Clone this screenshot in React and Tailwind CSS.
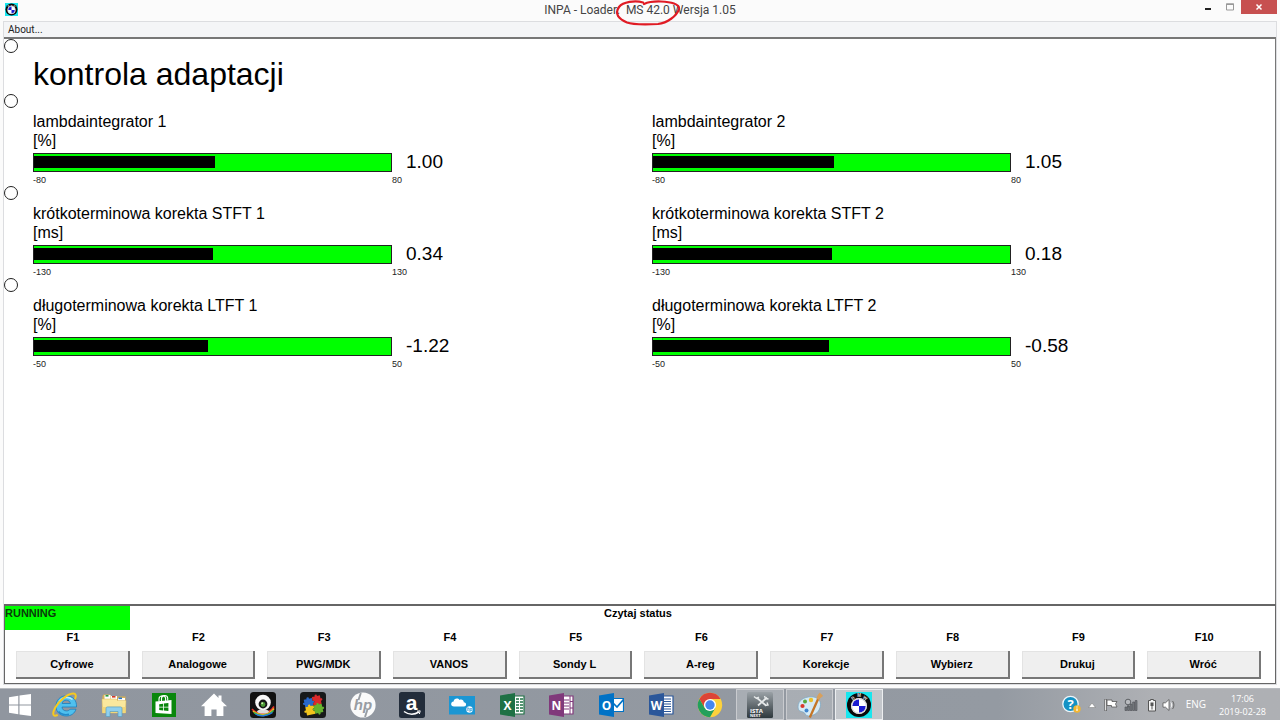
import React, { useState } from "react";

const ROWS = [
  {
    id: "lambda",
    unit: "%",
    min: -80,
    max: 80,
    gauges: [
      { label: "lambdaintegrator 1", value: 1.0 },
      { label: "lambdaintegrator 2", value: 1.05 },
    ],
  },
  {
    id: "stft",
    unit: "ms",
    min: -130,
    max: 130,
    gauges: [
      { label: "krótkoterminowa korekta STFT 1", value: 0.34 },
      { label: "krótkoterminowa korekta STFT 2", value: 0.18 },
    ],
  },
  {
    id: "ltft",
    unit: "%",
    min: -50,
    max: 50,
    gauges: [
      { label: "długoterminowa korekta LTFT 1", value: -1.22 },
      { label: "długoterminowa korekta LTFT 2", value: -0.58 },
    ],
  },
];

const FUNCTION_KEYS = [
  "Cyfrowe",
  "Analogowe",
  "PWG/MDK",
  "VANOS",
  "Sondy L",
  "A-reg",
  "Korekcje",
  "Wybierz",
  "Drukuj",
  "Wróć",
];

const Icon = ({ className = "h-[26px] w-[26px]", children }) => (
  <svg viewBox="0 0 26 26" className={className} aria-hidden="true">
    {children}
  </svg>
);

const RoundelIcon = ({ className }) => (
  <Icon className={className}>
    <rect width="26" height="26" fill="#18e6ee" />
    <circle cx="13" cy="13" r="12" fill="#0a0a0a" />
    <circle cx="13" cy="14" r="8" fill="#fff" />
    <path d="M13 14V7.200A6.800 6.800 0 0 0 6.200 14zM13 14v6.800a6.800 6.800 0 0 0 6.800-6.800z" fill="#1b1bd0" />
    <circle cx="13" cy="14" r="7.300" fill="none" stroke="#d4d4d4" strokeWidth="1" />
    <text x="7" y="7.500" fontSize="4.500" fontWeight="700" fill="#ddd" textAnchor="middle" transform="rotate(-36 7 6)" fontFamily="Liberation Sans">B</text>
    <text x="13" y="5" fontSize="4.500" fontWeight="700" fill="#ddd" textAnchor="middle" fontFamily="Liberation Sans">M</text>
    <text x="19" y="7.500" fontSize="4.500" fontWeight="700" fill="#ddd" textAnchor="middle" transform="rotate(36 19 6)" fontFamily="Liberation Sans">W</text>
  </Icon>
);

const WindowsIcon = () => (
  <Icon>
    <path d="M2 5.200 11.300 3.800V12.400H2zM12.500 3.600 24 2V12.400H12.500zM2 13.600H11.300V22.200L2 20.800zM12.500 13.600H24V24L12.500 22.400z" fill="#fff" />
  </Icon>
);

const ExplorerEIcon = () => (
  <Icon>
    <path
      d="M24.500 15H10c.2 2.400 1.900 3.900 4.400 3.900 1.700 0 3-.6 3.800-1.700h5.800c-1.300 4.300-5 6.800-9.700 6.800C8.300 24 4 20 4 14.200 4 8.200 8.300 3.800 14.200 3.800c6.600 0 10.700 4.400 10.300 11.200zM10.100 11.500h8.300c-.3-2-1.900-3.300-4.100-3.300-2.300 0-3.800 1.200-4.200 3.300z"
      fill="#4fc0ee"
      stroke="#1c7dbd"
      strokeWidth=".8"
    />
    <path d="M7.500 9c3-4 9-4.800 13-1.500" stroke="#b5ebfd" strokeWidth="1.600" fill="none" />
    <path d="M6.500 19.500c2 2.700 6.500 4 10.500 2.700" stroke="#2389c9" strokeWidth="1.600" fill="none" />
    <path d="M5 23.300C.5 25 .2 21 3.300 15.400 7.200 8.600 15.500 2 21 1.600c3.100-.1 3.200 2.400 2.200 4.900" fill="none" stroke="#f6c91f" strokeWidth="2" strokeLinecap="round" />
  </Icon>
);

const FolderIcon = () => (
  <Icon>
    <path d="M1.500 4 2.500 2.500h6.500l1 2h14.500v16H1.500z" fill="#d8b155" />
    <path d="M3.500 3h6v5h-6zM10 4h6v5h-6zM17 6h7v3h-7z" fill="#fff" />
    <path d="M4.500 3h3v1.600h-3z" fill="#279b41" />
    <path d="M11 4h3.500v1.600H11z" fill="#d63a27" />
    <path d="M17.500 5.500H21v1.600h-3.500z" fill="#2878c8" />
    <path d="M1 7h14l1.500 1.500H25L24.500 21h-23z" fill="#fae89d" stroke="#dbb95e" strokeWidth=".5" />
    <path d="M1.500 15h23v6h-23z" fill="#f3d777" />
    <path d="M5 24.500V16.500c0-1 .6-1.600 1.600-1.600h12.800c1 0 1.600.6 1.600 1.600v8h-4V19.500H9v5z" fill="#8fd0ee" stroke="#5a9dc0" strokeWidth=".7" />
  </Icon>
);

const StoreIcon = () => (
  <Icon>
    <rect x="1" y="1" width="24" height="24" fill="#0a870c" />
    <path d="M4.500 9.500 20.500 8v14L4.500 21z" fill="#fff" />
    <path d="M8 9.500V7c0-4 6-4.500 6.600-.8V9M10.500 9V6.500c0-3.600 5.600-4 6.200-.5v2.500" fill="none" stroke="#fff" strokeWidth="1.100" />
    <path d="M8.200 12.200l3.800-.5v3H8.200zM12.800 11.600l4.600-.6v3.700h-4.600zM8.200 15.500H12v3l-3.800-.4zM12.800 15.500h4.600v3.600l-4.600-.5z" fill="#0a870c" />
  </Icon>
);

const HomeIcon = () => (
  <Icon>
    <path d="M13 1.500 17.500 6V3.500H20.500V9L26 14.300H22.400V24H15.600V17.500H10.400V24H3.600V14.300H0z" fill="#fff" />
  </Icon>
);

const WebcamIcon = () => (
  <Icon>
    <rect width="26" height="26" rx="3.500" fill="#111" />
    <path d="M2 17c5 6 17 6 22-2.500" stroke="#e8312a" strokeWidth="1.600" fill="none" />
    <path d="M3 19c5.500 5.500 16 5 21-2.500" stroke="#f1b81c" strokeWidth="1.600" fill="none" />
    <path d="M4 20.500c5 4.500 14 4 19.500-2" stroke="#35b34a" strokeWidth="1.500" fill="none" />
    <path d="M5.500 22c4 2.800 12 2.400 17-1.500" stroke="#2878e0" strokeWidth="1.500" fill="none" />
    <ellipse cx="13" cy="19.500" rx="6" ry="2" fill="#ddd" />
    <circle cx="13" cy="10.500" r="7.800" fill="#f8f8f8" />
    <circle cx="13" cy="12" r="4.400" fill="#161616" />
    <circle cx="13" cy="12.500" r="2.400" fill="#4c9b35" />
    <circle cx="12.200" cy="11.300" r="1" fill="#c9f0b0" />
  </Icon>
);

const PuzzleIcon = () => (
  <Icon>
    <rect width="26" height="26" rx="3.500" fill="#17191a" />
    <g transform="rotate(-12 13 13)">
      <path d="M5 6h3c-.8-2.400 3-2.400 2.300 0H13.500V9c2-.6 2 2.600 0 2v2.500H5V11c-2.200.6-2.200-2.700 0-2z" fill="#2868cc" />
      <path d="M13.500 5h3c-.6-2.300 2.800-2.300 2.200 0h3v3.200c2.200-.5 2.200 2.600 0 2.200v3.100h-8.200V11c2 .6 2-2.600 0-2z" fill="#db2a2c" />
      <path d="M5 13.500h3c-.6-2.300 2.700-2.300 2.200 0h3.300v3c-2.200-.6-2.200 2.600 0 2.200V22H5v-3c-2.500.5-2.500-2.800 0-2.200z" fill="#f1c41c" />
      <path d="M13.500 13.500h3c-.6-2.200 2.600-2.200 2.200 0h3v3.200c2.200-.5 2.200 2.600 0 2.200V22h-3c.5 2.400-2.700 2.400-2.200 0h-3v-3.300c-2.200.4-2.200-2.800 0-2.200z" fill="#65b32e" />
    </g>
  </Icon>
);

const HpIcon = () => (
  <Icon>
    <circle cx="13" cy="13" r="12.600" fill="#fafafa" />
    <path d="M10.800 1 8.500 8M15 25l2.300-7" stroke="#989da3" strokeWidth="1.900" />
    <text x="13" y="18" fontSize="15" fontWeight="700" fontStyle="italic" textAnchor="middle" fill="#989da3" fontFamily="Liberation Sans">hp</text>
  </Icon>
);

const AmazonIcon = () => (
  <Icon>
    <rect width="26" height="26" rx="2.500" fill="#222c3a" />
    <text x="12.500" y="17.500" fontSize="21" fontWeight="700" textAnchor="middle" fill="#fff" fontFamily="Liberation Sans">a</text>
    <path d="M5 19.500c4.600 3.300 10.500 3.300 15 .5" stroke="#fff" strokeWidth="1.500" fill="none" />
    <path d="M18 19.200l3.200-.4-.8 3.200" stroke="#fff" strokeWidth="1" fill="none" />
  </Icon>
);

const CloudIcon = () => (
  <Icon>
    <rect y="4" width="26" height="18.500" fill="#1b96d3" />
    <path d="M5 14.500c-3.800 0-3.600-4.800-.4-5C4.800 6.200 9 5.500 10.500 8c1.900-1 4.200 0 4.300 2.200 3 0 3 4.300.2 4.300z" fill="#fff" />
    <circle cx="20.500" cy="17.500" r="3.200" fill="#fff" />
    <text x="20.500" y="19" fontSize="4.500" fontStyle="italic" fontWeight="700" textAnchor="middle" fill="#1b96d3" fontFamily="Liberation Sans">hp</text>
  </Icon>
);

const OfficeIcon = ({ letter, color, children }) => (
  <Icon>
    <path d="M14 4h11v18H14z" fill="#fff" stroke={color} strokeWidth="1.200" />
    {children}
    <path d="M1 3.600 16 1v24L1 22.400z" fill={color} />
    <text x="8.500" y="17.500" fontSize="12" fontWeight="700" textAnchor="middle" fill="#fff" fontFamily="Open Sans">
      {letter}
    </text>
  </Icon>
);

const ExcelIcon = () => (
  <OfficeIcon letter="X" color="#1e7145">
    <path d="M17 7h3M21 7h3M17 10h3M21 10h3M17 13h3M21 13h3M17 16h3M21 16h3M17 19h3M21 19h3" stroke="#1e7145" strokeWidth="1.600" />
  </OfficeIcon>
);

const OneNoteIcon = () => (
  <OfficeIcon letter="N" color="#80397b">
    <path d="M16 8h5M16 11h5M16 14h5M16 17h5" stroke="#80397b" strokeWidth="1" />
    <path d="M22 4v18M22 9.500h3M22 16h3" stroke="#80397b" strokeWidth="1" />
  </OfficeIcon>
);

const OutlookIcon = () => (
  <Icon>
    <path d="M14 6.500h11.500v13H14z" fill="#fff" stroke="#0072c6" strokeWidth="1.200" />
    <path d="M15 11l4 4 6.500-7.500" stroke="#0072c6" strokeWidth="1.700" fill="none" />
    <path d="M1 3.600 16 1v24L1 22.400z" fill="#0072c6" />
    <text x="8.500" y="17.500" fontSize="12" fontWeight="700" textAnchor="middle" fill="#fff" fontFamily="Open Sans">O</text>
  </Icon>
);

const WordIcon = () => (
  <OfficeIcon letter="W" color="#2b579a">
    <path d="M16 7h7M16 9.500h7M16 12h7M16 14.500h7M16 17h7M16 19.500h7" stroke="#2b579a" strokeWidth="1.100" />
  </OfficeIcon>
);

const ChromeIcon = () => (
  <Icon>
    <circle cx="13" cy="13" r="12.200" fill="#fdd23c" />
    <path d="M13 13 7.700 16.050 2.430 6.900A12.200 12.200 0 0 1 23.570 6.900H13z" fill="#dc4437" />
    <path d="M2.430 6.900A12.200 12.200 0 0 0 13 25.200L18.300 16.050 13 13 7.700 16.050z" fill="#23a05c" />
    <circle cx="13" cy="13" r="6.100" fill="#fff" />
    <circle cx="13" cy="13" r="4.700" fill="#4587f1" />
  </Icon>
);

const IstaIcon = () => (
  <Icon>
    <defs>
      <linearGradient id="ista" x2="0" y2="1">
        <stop offset="0" stopColor="#9aa1a6" />
        <stop offset="1" stopColor="#2e383d" />
      </linearGradient>
    </defs>
    <rect width="26" height="26" rx="1.500" fill="url(#ista)" />
    <path d="M9.500 5.500l9.500 8M20 5.500l-9 8" stroke="#e6e9ea" strokeWidth="1.800" />
    <path d="M7 4.500l2.500 2L12 5M17.500 4l1 2.500 3 .5M18 13.500l3-.5-1-2.500" stroke="#e6e9ea" strokeWidth="1.400" fill="none" />
    <text x="3" y="21" fontSize="6" fontWeight="700" fill="#fff" fontFamily="Open Sans">ISTA</text>
    <text x="3" y="25" fontSize="4" fontWeight="700" fill="#fff" fontFamily="Open Sans">NEXT</text>
  </Icon>
);

const PaintIcon = () => (
  <Icon>
    <path d="M1 15C1 8.500 7 4.800 14 4.800c6 0 9.500 3 9.500 7.700 0 6.500-5.500 11.500-12 11.500-3.500 0-3-3.500-5.500-4-2.800-.5-5-1.500-5-5z" fill="#d5eaf5" stroke="#7fa9c4" strokeWidth=".8" />
    <circle cx="5.500" cy="14" r="2.100" fill="#d9382c" />
    <circle cx="8" cy="9.500" r="2" fill="#58a83c" />
    <circle cx="14" cy="8" r="2.200" fill="#eac02f" />
    <circle cx="9.500" cy="18.500" r="2" fill="#3f85cf" />
    <path d="M22 5 12.800 25.500" stroke="#c47628" strokeWidth="2.300" />
    <path d="M19.500 6.500c.5-2 1-4 3.500-6 .4 1.500 2.500 2 3 3.500-1.500 1.500-3.500 2.500-4.500 4z" fill="#d8a05c" />
  </Icon>
);

const PINNED = [
  { name: "Internet Explorer", Glyph: ExplorerEIcon },
  { name: "Explorer", Glyph: FolderIcon },
  { name: "Store", Glyph: StoreIcon },
  { name: "Home", Glyph: HomeIcon },
  { name: "Webcam", Glyph: WebcamIcon },
  { name: "Puzzle", Glyph: PuzzleIcon },
  { name: "HP", Glyph: HpIcon },
  { name: "Amazon", Glyph: AmazonIcon },
  { name: "HP Connected", Glyph: CloudIcon },
  { name: "Excel", Glyph: ExcelIcon },
  { name: "OneNote", Glyph: OneNoteIcon },
  { name: "Outlook", Glyph: OutlookIcon },
  { name: "Word", Glyph: WordIcon },
  { name: "Chrome", Glyph: ChromeIcon },
  { name: "ISTA", Glyph: IstaIcon, state: "open" },
  { name: "Paint", Glyph: PaintIcon, state: "open" },
  { name: "INPA", Glyph: RoundelIcon, state: "active" },
];

const TASK_STYLES = {
  open: "border-[#c9cbcf] bg-white/20",
  active: "border-[#eceef0] bg-white/45",
  idle: "border-transparent",
};

const TitleBar = () => (
  <header className="grid h-[21px] grid-cols-[1fr_auto_1fr] items-start bg-[#fbfbfb]">
    <div className="pl-[5px] pt-[3px]">
      <RoundelIcon className="h-[13px] w-[13px]" />
    </div>
    <h1 className="relative whitespace-pre font-[Roboto,sans-serif] text-[12px] leading-[20px] text-[#444]">
      INPA - Loader:{"  "}MS 42.0 Wersja 1.05
      <svg viewBox="0 0 68 28" className="absolute -top-px left-[71px] z-10 h-[28px] w-[68px]" aria-hidden="true">
        <path
          d="M28 3.500C20 1 8 3 4 8c-5 7 0 12 8 15.500 6 2.300 20 2 31 1.500 9-1 19-8 21-15 .6-5-8-7-18-7.500-6-.2-12 .2-17 2.500"
          fill="none"
          stroke="#e01b24"
          strokeWidth="2.200"
          strokeLinecap="round"
        />
      </svg>
    </h1>
    <div className="flex justify-end pr-[3px]">
      <button type="button" aria-label="Minimize" className="flex h-[14px] w-[22px] items-center justify-center">
        <svg viewBox="0 0 8 8" className="h-2 w-2">
          <path d="M1 5h6v2H1z" fill="#222" />
        </svg>
      </button>
      <button type="button" aria-label="Maximize" className="flex h-[14px] w-[22px] items-center justify-center">
        <svg viewBox="0 0 8 8" className="h-2 w-2">
          <path d="M.5 1h7v6h-7z" fill="none" stroke="#999" />
          <path d="M0 .5h8V2H0z" fill="#999" />
        </svg>
      </button>
      <button type="button" aria-label="Close" className="flex h-[14px] w-9 items-center justify-center bg-[#c75050]">
        <svg viewBox="0 0 8 8" className="h-2 w-2">
          <path d="M1.500 1.500l5 5M6.500 1.500l-5 5" stroke="#fff" strokeWidth="1.500" />
        </svg>
      </button>
    </div>
  </header>
);

const Gauge = ({ label, value, unit, min, max }) => {
  const percent = ((value - min) / (max - min)) * 100;

  return (
    <div className="pt-[18px]">
      <div className="text-[16px] leading-[19px]">
        <p>{label}</p>
        <p>[{unit}]</p>
      </div>
      <div className="mt-[3px] flex h-[19px] items-center">
        <div className="h-full w-[58%] border border-[#222] bg-[#00ff00] pb-[3px] pt-[2px]">
          <div className="h-full bg-black" style={{ width: `${percent}%` }} />
        </div>
        <span className="ml-[14px] text-[19px]">{value.toFixed(2)}</span>
      </div>
      <div className="flex h-[18px] items-center text-[9px] text-[#222]">
        <span className="w-[58%]">{min}</span>
        <span>{max}</span>
      </div>
    </div>
  );
};

const SelectCircle = ({ label, value, selected, onSelect }) => (
  <input
    type="radio"
    name="line"
    aria-label={label}
    checked={selected === value}
    onChange={() => onSelect(value)}
    className="block h-[14px] w-[14px] appearance-none rounded-full border border-[#222] bg-white checked:bg-black"
  />
);

const TrayIcons = () => (
  <div className="flex items-center">
    <svg viewBox="0 0 20 20" className="h-5 w-5" aria-hidden="true">
      <circle cx="8.500" cy="9" r="7.700" fill="#1592c4" stroke="#eef6fa" strokeWidth="1.300" />
      <text x="8.500" y="14" fontSize="13" fontWeight="700" textAnchor="middle" fill="#fff" fontFamily="Open Sans">?</text>
      <circle cx="15" cy="14" r="3.700" fill="#f2b632" />
      <path d="M15 13.400v2.700M15 11.600v1" stroke="#fff" strokeWidth="1.200" />
    </svg>
    <svg viewBox="0 0 8 8" className="ml-[6px] h-2 w-2" aria-hidden="true">
      <path d="M.5 6.500 4 2l3.500 4.500z" fill="#fff" stroke="#777" strokeWidth=".5" />
    </svg>
    <svg viewBox="0 0 14 14" className="ml-2 h-[14px] w-[14px]" aria-hidden="true">
      <path d="M1.700 1v12" stroke="#555" strokeWidth="2.400" />
      <path d="M1.700 1.500v11" stroke="#fff" strokeWidth="1" />
      <path d="M3 2h5v1.500h5L11.500 6l1.500 3H7.500V7.500H3z" fill="#fff" stroke="#555" strokeWidth=".8" />
    </svg>
    <svg viewBox="0 0 14 14" className="ml-[6px] h-[14px] w-[14px]" aria-hidden="true">
      <path d="M1 12.500h1.800V9H1zM3.600 12.500h1.800V8H3.600zM6.200 12.500H8V6H6.200zM8.700 12.500h1.800V4H8.700zM11.200 12.500H13V2.500h-1.800z" fill="#777b80" stroke="#4b4e52" strokeWidth=".6" />
      <circle cx="4" cy="4" r="2.800" fill="#b9bbbf" stroke="#55585c" strokeWidth=".9" />
      <path d="M4 7v2.500" stroke="#55585c" strokeWidth="1" />
    </svg>
    <svg viewBox="0 0 10 14" className="ml-[9px] h-[14px] w-[10px]" aria-hidden="true">
      <path d="M1.500 2.500h2v-1h3v1h2v10.500h-7z" fill="#f4f4f4" stroke="#555" strokeWidth="1" />
      <path d="M3.500 4.500h3V8h-3zM4.500 8v3.500h1V8z" fill="#555" />
    </svg>
    <svg viewBox="0 0 14 14" className="ml-[5px] h-[14px] w-[14px]" aria-hidden="true">
      <path d="M1 4.800h2.500L7 1.500v11L3.500 9.200H1z" fill="#fff" stroke="#555" strokeWidth=".8" />
      <path d="M9 4.500c1 1.400 1 3.600 0 5" stroke="#fff" strokeWidth="1" fill="none" />
      <path d="M10.600 3c1.800 2.400 1.800 5.600 0 8" stroke="#666" strokeWidth="1" fill="none" />
    </svg>
  </div>
);

const Taskbar = () => (
  <footer className="flex h-8 items-stretch border-t border-[#b8bbc0] bg-linear-to-r from-[#90969f] via-[#949aa2] via-78% to-[#aeb0b4] to-90%">
    <button type="button" aria-label="Start" className="flex w-10 items-center justify-center">
      <WindowsIcon />
    </button>
    <nav className="grid w-[844px] grid-cols-[repeat(17,minmax(0,1fr))]">
      {PINNED.map(({ name, Glyph, state = "idle" }) => (
        <button
          key={name}
          type="button"
          aria-label={name}
          className={`mx-px flex items-center justify-center border ${TASK_STYLES[state]}`}
        >
          <Glyph />
        </button>
      ))}
    </nav>
    <div className="ml-auto flex items-center pr-[14px] font-['Open_Sans',sans-serif] text-[9px] text-white">
      <TrayIcons />
      <span className="ml-[10px] text-[10px]">ENG</span>
      <div className="ml-[13px] text-center leading-[13px]">
        <p>17:06</p>
        <p>2019-02-28</p>
      </div>
    </div>
  </footer>
);

const App = () => {
  const [selected, setSelected] = useState(null);

  return (
    <div className="flex min-h-screen flex-col bg-[#fbfbfb] font-['Liberation_Sans',Arial,sans-serif] text-black">
      <TitleBar />

      <div className="mx-[3px] flex flex-1 flex-col border border-[#dcdde0]">
        <nav className="flex h-[15px] items-center bg-[#f4f5f7] pl-1">
          <button type="button" className="font-[Roboto,sans-serif] text-[10px] leading-none text-[#222]">
            About...
          </button>
        </nav>

        <main className="flex-1 border-r border-t-2 border-[#777] bg-white">
          <div className="flex h-[55px]">
            <div className="w-[29px]">
              <SelectCircle label="kontrola adaptacji" value="title" selected={selected} onSelect={setSelected} />
            </div>
            <h2 className="pt-4 text-[32px] leading-[38px]">kontrola adaptacji</h2>
          </div>
          {ROWS.map((row) => (
            <div key={row.id} className="flex h-[92px]">
              <div className="w-[29px]">
                <SelectCircle label={row.gauges[0].label} value={row.id} selected={selected} onSelect={setSelected} />
              </div>
              <div className="grid flex-1 grid-cols-2 pr-1">
                {row.gauges.map((gauge) => (
                  <Gauge key={gauge.label} {...gauge} unit={row.unit} min={row.min} max={row.max} />
                ))}
              </div>
            </div>
          ))}
        </main>

        {/* Function keys */}
        <section className="border border-t-2 border-[#666] bg-white pb-1 text-[11px] font-bold">
          <div className="grid h-6 grid-cols-[125px_1fr_125px] pr-1 text-center leading-[14px]">
            <p className="bg-[#00ff00] text-left text-[#0a3a0a]">RUNNING</p>
            <p>Czytaj status</p>
          </div>
          <div className="grid grid-cols-10 pl-[5px] pr-2 text-center">
            {FUNCTION_KEYS.map((name, index) => (
              <div key={name} className="px-[6px]">
                <p className="leading-[14px]">F{index + 1}</p>
                <button
                  type="button"
                  className="mt-[7px] h-7 w-full border-b-2 border-r-2 border-[#777] bg-[#efefef] shadow-[inset_1px_1px_0_#e3e3e3]"
                >
                  {name}
                </button>
              </div>
            ))}
          </div>
        </section>
      </div>

      <div className="h-[3px]" />
      <Taskbar />
    </div>
  );
};

export default App;
